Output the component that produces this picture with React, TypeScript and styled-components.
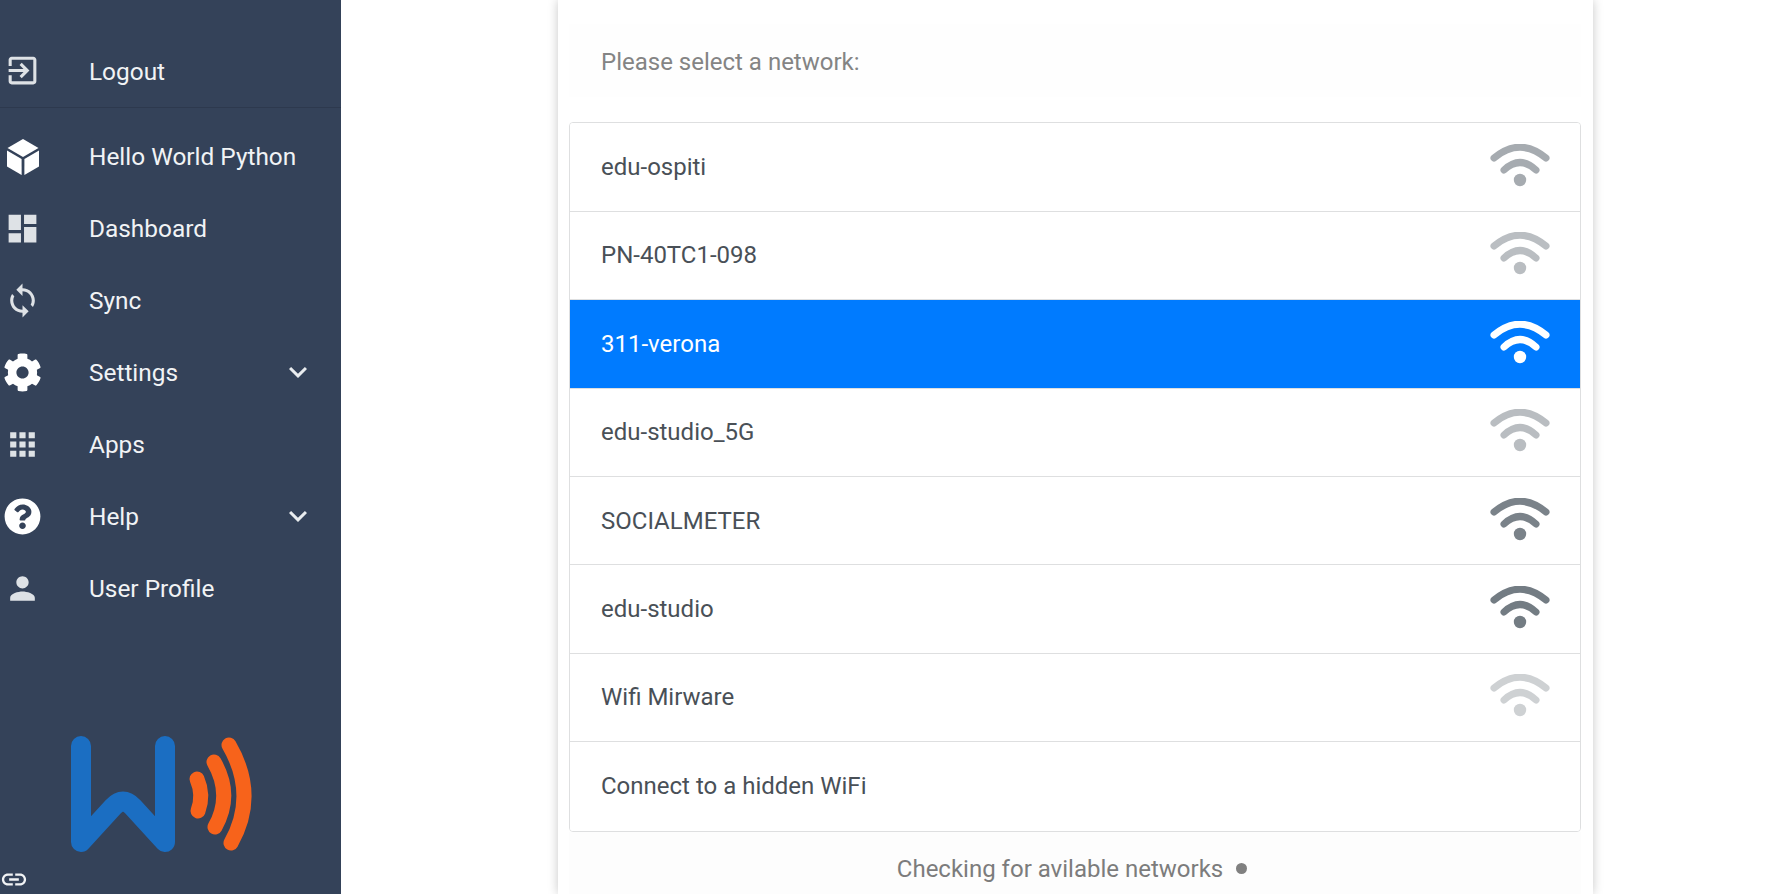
import React from "react";
import styled, { createGlobalStyle } from "styled-components";
import { FaCog, FaQuestionCircle } from "react-icons/fa";

const GlobalStyle = createGlobalStyle`
    html, body {
        margin: 0;
        height: 100%;
        overflow: hidden;
        background: #fff;
        font-family: Roboto, "Liberation Sans", sans-serif;
    }
`;

const Page = styled.div`
    display: flex;
    height: 894px;
    overflow: hidden;
`;

const Sidebar = styled.aside`
    width: 341px;
    flex: none;
    display: flex;
    flex-direction: column;
    background: #344259;
    color: #f1f3f5;
    padding-top: 35px;
    box-sizing: border-box;
`;

const Divider = styled.div`
    height: 1px;
    background: #2d394e;
    margin-bottom: 13px;
`;

const NavRow = styled.div`
    height: 72px;
    display: flex;
    align-items: center;
    font-size: 24.4px;
`;

const NavIcon = styled.span<{ $bright?: boolean; $lift?: boolean }>`
    width: 45.6px;
    height: 72px;
    margin-right: 43.4px;
    padding-bottom: ${(p) => (p.$lift ? "2px" : "0")};
    box-sizing: border-box;
    flex: none;
    display: flex;
    align-items: center;
    justify-content: center;
    color: ${(p) => (p.$bright ? "#ffffff" : "#dee2e6")};
`;

const NavLabel = styled.span<{ $nudge?: boolean }>`
    flex: 1;
    padding-top: ${(p) => (p.$nudge ? "1px" : "0")};
`;

const Chevron = styled.svg`
    width: 36px;
    height: 36px;
    margin: -2px 25px 0 0;
    fill: #e9ecef;
`;

const Logo = styled.svg`
    display: block;
    width: 341px;
    height: 130px;
    margin-top: 105px;
    flex: none;
`;

const LinkIcon = styled.svg`
    display: block;
    width: 30px;
    height: 30px;
    margin: 5px 0 0 -1px;
    fill: #f1f3f5;
`;

const Main = styled.main`
    flex: 1;
    min-width: 0;
    padding-left: 217px;
`;

const Card = styled.section`
    width: 1035px;
    height: 894px;
    box-sizing: border-box;
    background: #fff;
    padding: 24px 12px 0 11px;
    box-shadow: 0 0 10px rgba(0, 0, 0, 0.22);
`;

const Prompt = styled.div`
    height: 73px;
    box-sizing: border-box;
    padding: 2px 32px 0;
    display: flex;
    align-items: center;
    font-size: 24px;
    color: #848484;
    background: #fefefe;
    margin-bottom: 25.4px;
`;

const NetworkList = styled.ul`
    list-style: none;
    margin: 0;
    padding: 0;
    border: 1px solid #dedfe0;
    border-radius: 4px;
    overflow: hidden;
`;

const NetworkRow = styled.li<{ $active?: boolean }>`
    height: 88.4px;
    box-sizing: border-box;
    padding: 0 30px 0 31px;
    display: flex;
    align-items: center;
    justify-content: space-between;
    font-size: 24px;
    color: ${(p) => (p.$active ? "#ffffff" : "#495057")};
    background: ${(p) => (p.$active ? "#007bff" : "#ffffff")};
    border-bottom: 1px solid #dedfe0;

    &:last-child {
        border-bottom: 0;
    }
`;

const WifiGlyph = styled.svg<{ $level: number; $active?: boolean }>`
    width: 60px;
    height: 44px;
    margin-top: -2px;
    flex: none;
    color: ${(p) => (p.$active ? "#ffffff" : "#6c757d")};
    opacity: ${(p) => p.$level};
`;

const Footer = styled.div`
    height: 74px;
    padding-right: 6px;
    display: flex;
    align-items: center;
    justify-content: center;
    gap: 13px;
    font-size: 24px;
    color: #7c7c7c;
    background: #fdfdfd;
`;

const Dot = styled.span`
    width: 11px;
    height: 11px;
    border-radius: 50%;
    background: #808080;
`;

function MaterialIcon({ d, size = 37 }: { d: string; size?: number }) {
    return (
        <svg width={size} height={size} viewBox="0 0 24 24" fill="currentColor">
            <path d={d} />
        </svg>
    );
}

function Cube() {
    return (
        <svg width="36" height="38" viewBox="0 0 36 38" fill="currentColor">
            <path d="M18 1 L33.5 10 L18 19 L2.5 10 Z" />
            <path d="M2 12.5 L16.6 21 V37 L2 28.5 Z" />
            <path d="M34 12.5 L19.4 21 V37 L34 28.5 Z" />
        </svg>
    );
}

function Wifi({ level, active }: { level: number; active?: boolean }) {
    return (
        <WifiGlyph viewBox="0 0 60 44" $level={level} $active={active}>
            <path d="M4 14 Q30 -7.5 56 14" fill="none" stroke="currentColor" strokeWidth="7" strokeLinecap="round" />
            <path d="M14 26 Q30 11 46 26" fill="none" stroke="currentColor" strokeWidth="7" strokeLinecap="round" />
            <circle cx="30" cy="36" r="6.2" fill="currentColor" />
        </WifiGlyph>
    );
}

const icons = {
    logout: "M10.09 15.59L11.5 17l5-5-5-5-1.41 1.41L12.67 11H3v2h9.67l-2.58 2.59zM19 3H5c-1.11 0-2 .9-2 2v4h2V5h14v14H5v-4H3v4c0 1.1.89 2 2 2h14c1.1 0 2-.9 2-2V5c0-1.1-.9-2-2-2z",
    dashboard: "M3 13h8V3H3v10zm0 8h8v-6H3v6zm10 0h8V11h-8v10zm0-18v6h8V3h-8z",
    sync: "M12 4V1L8 5l4 4V6c3.31 0 6 2.69 6 6 0 1.01-.25 1.97-.7 2.8l1.46 1.46C19.54 15.03 20 13.57 20 12c0-4.42-3.58-8-8-8zm0 14c-3.31 0-6-2.69-6-6 0-1.01.25-1.97.7-2.8L5.24 7.74C4.46 8.97 4 10.43 4 12c0 4.42 3.58 8 8 8v3l4-4-4-4v3z",
    apps: "M4 8h4V4H4v4zm6 12h4v-4h-4v4zm-6 0h4v-4H4v4zm0-6h4v-4H4v4zm6 0h4v-4h-4v4zm6-10v4h4V4h-4zm-6 4h4V4h-4v4zm6 6h4v-4h-4v4zm0 6h4v-4h-4v4z",
    person: "M12 12c2.21 0 4-1.79 4-4s-1.79-4-4-4-4 1.79-4 4 1.79 4 4 4zm0 2c-2.67 0-8 1.34-8 4v2h16v-2c0-2.66-5.33-4-8-4z",
    more: "M16.59 8.59L12 13.17 7.41 8.59 6 10l6 6 6-6z",
    link: "M3.9 12c0-1.71 1.39-3.1 3.1-3.1h4V7H7c-2.76 0-5 2.24-5 5s2.24 5 5 5h4v-1.9H7c-1.71 0-3.1-1.39-3.1-3.1zM8 13h8v-2H8v2zm9-6h-4v1.9h4c1.71 0 3.1 1.39 3.1 3.1s-1.39 3.1-3.1 3.1h-4V17h4c2.76 0 5-2.24 5-5s-2.24-5-5-5z",
};

const networks = [
    { name: "edu-ospiti", level: 0.6 },
    { name: "PN-40TC1-098", level: 0.47 },
    { name: "311-verona", level: 1, active: true },
    { name: "edu-studio_5G", level: 0.47 },
    { name: "SOCIALMETER", level: 0.9 },
    { name: "edu-studio", level: 0.95 },
    { name: "Wifi Mirware", level: 0.33 },
];

export default function App() {
    return (
        <Page>
            <GlobalStyle />
            <Sidebar>
                <NavRow>
                    <NavIcon $lift><MaterialIcon d={icons.logout} /></NavIcon>
                    <NavLabel $nudge>Logout</NavLabel>
                </NavRow>
                <Divider />
                <NavRow>
                    <NavIcon $bright><Cube /></NavIcon>
                    <NavLabel>Hello World Python</NavLabel>
                </NavRow>
                <NavRow>
                    <NavIcon><MaterialIcon d={icons.dashboard} /></NavIcon>
                    <NavLabel>Dashboard</NavLabel>
                </NavRow>
                <NavRow>
                    <NavIcon><MaterialIcon d={icons.sync} /></NavIcon>
                    <NavLabel>Sync</NavLabel>
                </NavRow>
                <NavRow>
                    <NavIcon $bright><FaCog size={39} /></NavIcon>
                    <NavLabel>Settings</NavLabel>
                    <Chevron viewBox="0 0 24 24"><path d={icons.more} /></Chevron>
                </NavRow>
                <NavRow>
                    <NavIcon><MaterialIcon d={icons.apps} /></NavIcon>
                    <NavLabel>Apps</NavLabel>
                </NavRow>
                <NavRow>
                    <NavIcon $bright><FaQuestionCircle size={37} /></NavIcon>
                    <NavLabel>Help</NavLabel>
                    <Chevron viewBox="0 0 24 24"><path d={icons.more} /></Chevron>
                </NavRow>
                <NavRow>
                    <NavIcon><MaterialIcon d={icons.person} /></NavIcon>
                    <NavLabel>User Profile</NavLabel>
                </NavRow>
                <Logo viewBox="0 730 341 130">
                    <path
                        d="M81 746 V842 L113 807 Q123 796 133 807 L165 842 V746"
                        fill="none"
                        stroke="#1b6ec2"
                        strokeWidth="20"
                        strokeLinecap="round"
                        strokeLinejoin="round"
                    />
                    <g fill="none" stroke="#f7631b" strokeLinecap="round" strokeWidth="15">
                        <path d="M197 779 Q204 795 198 811" />
                        <path d="M214 762 Q233 795 215 827" />
                        <path d="M229 745 Q258 795 231 843" />
                    </g>
                </Logo>
                <LinkIcon viewBox="0 0 24 24"><path d={icons.link} /></LinkIcon>
            </Sidebar>
            <Main>
                <Card>
                    <Prompt>Please select a network:</Prompt>
                    <NetworkList>
                        {networks.map((n) => (
                            <NetworkRow key={n.name} $active={n.active}>
                                {n.name}
                                <Wifi level={n.level} active={n.active} />
                            </NetworkRow>
                        ))}
                        <NetworkRow>Connect to a hidden WiFi</NetworkRow>
                    </NetworkList>
                    <Footer>
                        Checking for avilable networks
                        <Dot />
                    </Footer>
                </Card>
            </Main>
        </Page>
    );
}
